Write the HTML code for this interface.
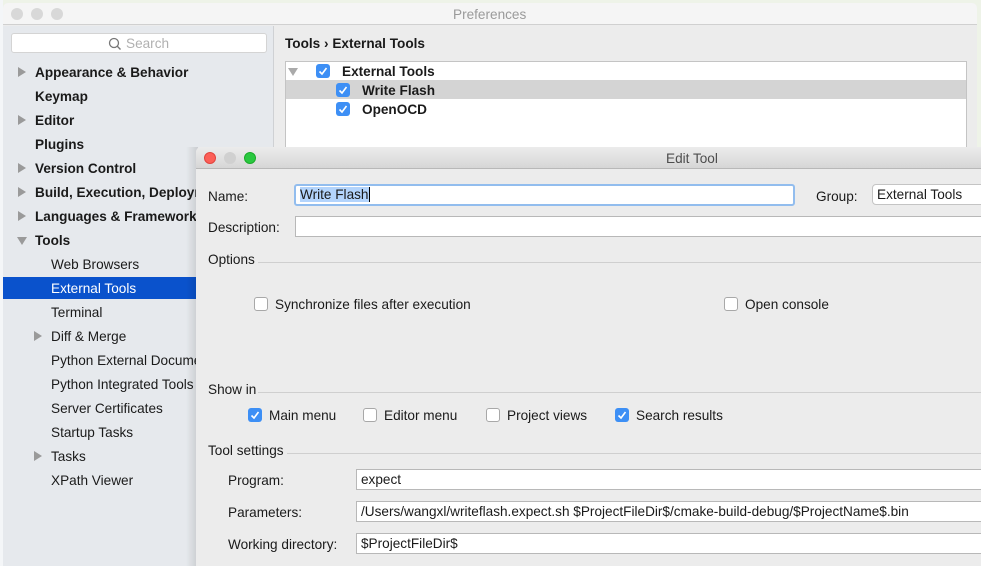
<!DOCTYPE html>
<html><head><meta charset="utf-8"><style>
*{margin:0;padding:0;box-sizing:border-box}
body{width:981px;height:566px;overflow:hidden;position:relative;background:#eef3e8;font-family:"Liberation Sans",Arial,sans-serif;font-size:13.6px;color:#1a1a1a}
.a{position:absolute;white-space:nowrap}
.t{margin-top:1px}
.b{font-weight:bold}
.cb{position:absolute;width:14px;height:14px;border-radius:3px;background:#3d8ff5;}
.cb svg{position:absolute;left:1px;top:1px}
.ub{position:absolute;width:14px;height:14px;border-radius:3px;background:#fff;border:1px solid #a8a8a8}
.tri{position:absolute;width:0;height:0;border-top:5px solid transparent;border-bottom:5px solid transparent;border-left:8px solid #9a9a9a}
.trid{position:absolute;width:0;height:0;border-left:5px solid transparent;border-right:5px solid transparent;border-top:8px solid #9a9a9a}
.in{position:absolute;background:#fff;border:1px solid #b8b8b8;height:21px;padding:2px 4px;white-space:nowrap}
.hr{position:absolute;height:1px;background:#cfcfcf}
</style></head><body>
<div class="a" style="left:0;top:0;width:3px;height:566px;background:#f4f6f8"></div>
<div class="a" style="left:3px;top:3px;width:974px;height:563px;background:#ececec;border-radius:5px 5px 0 0;overflow:hidden">
 <div class="a" style="left:0;top:0;width:974px;height:22px;background:#f5f5f5;border-bottom:1px solid #d0d0d0"></div>
 <div class="a" style="left:8px;top:5px;width:12px;height:12px;border-radius:6px;background:#d8d8d8"></div>
 <div class="a" style="left:28px;top:5px;width:12px;height:12px;border-radius:6px;background:#d8d8d8"></div>
 <div class="a" style="left:48px;top:5px;width:12px;height:12px;border-radius:6px;background:#d8d8d8"></div>
 <div class="a" style="left:450px;top:4px;color:#9a9a9a">Preferences</div>
 <div class="a" style="left:0;top:23px;width:271px;height:540px;background:#e6e9ed;border-right:1px solid #cfd1d4"></div>
</div>
<div class="a" style="left:11px;top:33px;width:256px;height:20px;background:#fff;border:1px solid #d4d4d4;border-radius:3px"></div>
<svg class="a" style="left:108px;top:37px" width="14" height="14"><circle cx="6" cy="6" r="4.5" fill="none" stroke="#777" stroke-width="1.3"/><line x1="9.3" y1="9.3" x2="12.5" y2="12.5" stroke="#777" stroke-width="1.4"/></svg>
<div class="a" style="left:126px;top:36px;color:#b0b0b0">Search</div>

<div class="tri" style="left:18px;top:67px"></div><div class="a b t" style="left:35px;top:64px">Appearance &amp; Behavior</div>
<div class="a b t" style="left:35px;top:88px">Keymap</div>
<div class="tri" style="left:18px;top:115px"></div><div class="a b t" style="left:35px;top:112px">Editor</div>
<div class="a b t" style="left:35px;top:136px">Plugins</div>
<div class="tri" style="left:18px;top:163px"></div><div class="a b t" style="left:35px;top:160px">Version Control</div>
<div class="tri" style="left:18px;top:187px"></div><div class="a b t" style="left:35px;top:184px">Build, Execution, Deployment</div>
<div class="tri" style="left:18px;top:211px"></div><div class="a b t" style="left:35px;top:208px">Languages &amp; Frameworks</div>
<div class="trid" style="left:17px;top:237px"></div><div class="a b t" style="left:35px;top:232px">Tools</div>
<div class="a t" style="left:51px;top:256px">Web Browsers</div>
<div class="a" style="left:3px;top:277px;width:193px;height:22px;background:#0a52cc"></div>
<div class="a t" style="left:51px;top:280px;color:#fff">External Tools</div>
<div class="a t" style="left:51px;top:304px">Terminal</div>
<div class="tri" style="left:34px;top:331px"></div><div class="a t" style="left:51px;top:328px">Diff &amp; Merge</div>
<div class="a t" style="left:51px;top:352px">Python External Documentation</div>
<div class="a t" style="left:51px;top:376px">Python Integrated Tools</div>
<div class="a t" style="left:51px;top:400px">Server Certificates</div>
<div class="a t" style="left:51px;top:424px">Startup Tasks</div>
<div class="tri" style="left:34px;top:451px"></div><div class="a t" style="left:51px;top:448px">Tasks</div>
<div class="a t" style="left:51px;top:472px">XPath Viewer</div>

<div class="a b t" style="left:285px;top:35px">Tools › External Tools</div>
<div class="a" style="left:285px;top:61px;width:682px;height:95px;background:#fff;border:1px solid #c4c4c4"></div>
<div class="a" style="left:286px;top:80px;width:680px;height:19px;background:#d4d4d4"></div>
<div class="trid" style="left:288px;top:68px;border-top-color:#aaa"></div>
<div class="cb" style="left:316px;top:64px"><svg width="12" height="12"><path d="M2.5 6.5 L5 9 L9.5 3" fill="none" stroke="#fff" stroke-width="1.6"/></svg></div>
<div class="a b t" style="left:342px;top:63px">External Tools</div>
<div class="cb" style="left:336px;top:83px"><svg width="12" height="12"><path d="M2.5 6.5 L5 9 L9.5 3" fill="none" stroke="#fff" stroke-width="1.6"/></svg></div>
<div class="a b t" style="left:362px;top:82px">Write Flash</div>
<div class="cb" style="left:336px;top:102px"><svg width="12" height="12"><path d="M2.5 6.5 L5 9 L9.5 3" fill="none" stroke="#fff" stroke-width="1.6"/></svg></div>
<div class="a b t" style="left:362px;top:101px">OpenOCD</div>

<div class="a" style="left:186px;top:147px;width:12px;height:419px;background:linear-gradient(to right,rgba(0,0,0,0),rgba(0,0,0,0.12))"></div>
<div class="a" style="left:196px;top:147px;width:790px;height:419px;background:#ececec;border-radius:5px 0 0 0;overflow:hidden">
 <div class="a" style="left:0;top:0;width:790px;height:22px;background:linear-gradient(#ececec,#d6d6d6);border-bottom:1px solid #b8b8b8"></div>
</div>
<div class="a" style="left:204px;top:152px;width:12px;height:12px;border-radius:6px;background:#fc5f57;border:1px solid #e0443e"></div>
<div class="a" style="left:224px;top:152px;width:12px;height:12px;border-radius:6px;background:#d0d0d0"></div>
<div class="a" style="left:244px;top:152px;width:12px;height:12px;border-radius:6px;background:#2ac840;border:1px solid #1aab29"></div>
<div class="a" style="left:666px;top:151px;color:#4d4d4d">Edit Tool</div>

<div class="a t" style="left:208px;top:188px">Name:</div>
<div class="in" style="left:294px;top:184px;width:501px;height:22px;border:2px solid #92bdee;border-radius:3px;padding:1px 4px"><span style="background:#b3d4fc">Write Flash</span><span style="border-left:1px solid #000"></span></div>
<div class="a t" style="left:816px;top:188px">Group:</div>
<div class="in" style="left:872px;top:184px;width:120px;border-radius:4px;border-color:#c4c4c4">External Tools</div>
<div class="a t" style="left:208px;top:219px">Description:</div>
<div class="in" style="left:295px;top:216px;width:700px"></div>
<div class="a t" style="left:208px;top:251px">Options</div>
<div class="hr" style="left:258px;top:262px;width:730px"></div>
<div class="ub" style="left:254px;top:297px"></div><div class="a t" style="left:275px;top:296px">Synchronize files after execution</div>
<div class="ub" style="left:724px;top:297px"></div><div class="a t" style="left:745px;top:296px">Open console</div>
<div class="a t" style="left:208px;top:381px">Show in</div>
<div class="hr" style="left:258px;top:392px;width:730px"></div>
<div class="cb" style="left:248px;top:408px"><svg width="12" height="12"><path d="M2.5 6.5 L5 9 L9.5 3" fill="none" stroke="#fff" stroke-width="1.6"/></svg></div><div class="a t" style="left:269px;top:407px">Main menu</div>
<div class="ub" style="left:363px;top:408px"></div><div class="a t" style="left:384px;top:407px">Editor menu</div>
<div class="ub" style="left:486px;top:408px"></div><div class="a t" style="left:507px;top:407px">Project views</div>
<div class="cb" style="left:615px;top:408px"><svg width="12" height="12"><path d="M2.5 6.5 L5 9 L9.5 3" fill="none" stroke="#fff" stroke-width="1.6"/></svg></div><div class="a t" style="left:636px;top:407px">Search results</div>
<div class="a t" style="left:208px;top:442px">Tool settings</div>
<div class="hr" style="left:287px;top:453px;width:700px"></div>
<div class="a t" style="left:228px;top:472px">Program:</div>
<div class="in" style="left:356px;top:469px;width:640px">expect</div>
<div class="a t" style="left:228px;top:504px">Parameters:</div>
<div class="in" style="left:356px;top:501px;width:640px">/Users/wangxl/writeflash.expect.sh $ProjectFileDir$/cmake-build-debug/$ProjectName$.bin</div>
<div class="a t" style="left:228px;top:536px">Working directory:</div>
<div class="in" style="left:356px;top:533px;width:640px">$ProjectFileDir$</div>
</body></html>
